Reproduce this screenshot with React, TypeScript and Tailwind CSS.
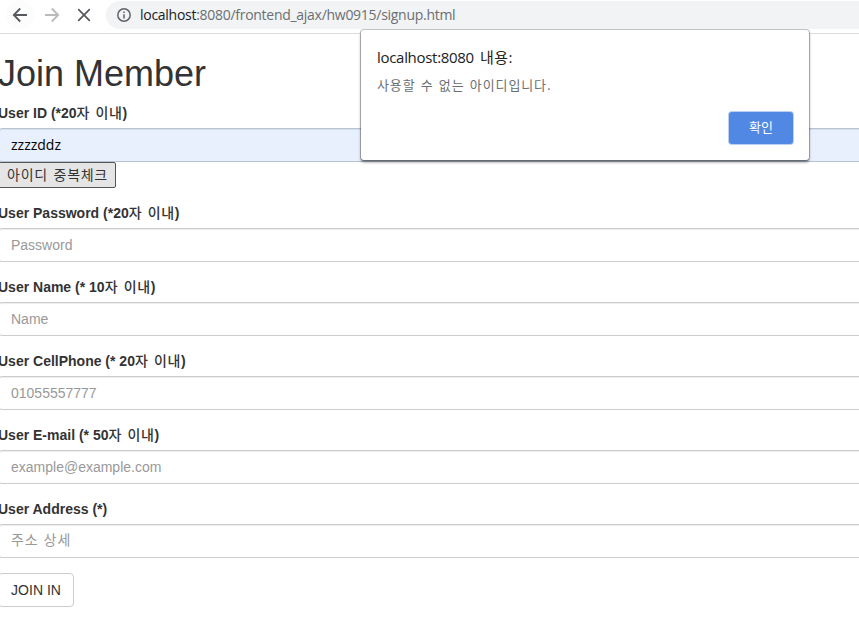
import React from 'react';

type FieldProps = {
  label: React.ReactNode;
  placeholder: string;
  korean?: boolean;
};

const fieldBox =
  'block h-[34px] w-full rounded-[4px] border px-3 text-sm leading-5 shadow-[inset_0_1px_1px_rgba(0,0,0,0.075)] outline-none placeholder:text-[#999999] placeholder:opacity-100';

function Hangul({ children }: { children: React.ReactNode }) {
  return (
    <span className="font-['Noto_Sans_CJK_KR',sans-serif] font-medium leading-none tracking-[0.6px] [word-spacing:1.8px]">
      {children}
    </span>
  );
}

function Label({ children }: { children: React.ReactNode }) {
  return <label className="mb-[5px] block h-5 whitespace-nowrap text-sm leading-5 font-bold">{children}</label>;
}

function Field({ label, placeholder, korean }: FieldProps) {
  return (
    <div className="mb-[15px]">
      <Label>{label}</Label>
      <input
        className={`${fieldBox} border-[#cccccc] bg-white ${
          korean
            ? "pt-1 pb-2 font-['Noto_Sans_CJK_KR',sans-serif] tracking-[0.9px] [word-spacing:1px]"
            : 'py-1.5'
        }`}
        placeholder={placeholder}
      />
    </div>
  );
}

function Toolbar() {
  return (
    <header className="flex h-[34px] items-start border-b border-[#dadce0] bg-white">
      <div className="ml-[6px] flex h-[29px] w-7 items-center justify-center rounded-full bg-[#fcfcfc]">
        <svg width="16" height="16" viewBox="0 0 16 16" className="mt-px" fill="none" stroke="#55585c" strokeWidth="1.8">
          <path d="M15 8H2M8.2 1.5L1.8 8l6.4 6.5" />
        </svg>
      </div>
      <div className="ml-[10px] flex h-[29px] w-4 items-center">
        <svg width="16" height="16" viewBox="0 0 16 16" className="mt-px" fill="none" stroke="#b9bbbd" strokeWidth="1.8">
          <path d="M1 8h13M7.8 1.5L14.2 8l-6.4 6.5" />
        </svg>
      </div>
      <div className="ml-4 flex h-[29px] w-4 items-center">
        <svg width="16" height="16" viewBox="0 0 16 16" className="mt-px" fill="none" stroke="#55585c" strokeWidth="1.7">
          <path d="M2.2 2.2l11.6 11.6M13.8 2.2L2.2 13.8" />
        </svg>
      </div>
      <div className="mt-px ml-[14px] flex h-7 flex-1 items-center rounded-l-full bg-[#f1f3f4] pl-[11px]">
        <svg width="14" height="14" viewBox="0 0 14 14" fill="none" stroke="#5f6368" strokeWidth="1.5">
          <circle cx="7" cy="7" r="6.2" />
          <path d="M7 6.2v4.3M7 3.5v1.5" />
        </svg>
        <span className="ml-[9px] whitespace-nowrap font-['Open_Sans',sans-serif] text-[14px] leading-5 tracking-[-0.28px] text-[#6b6f73]">
          <span className="text-[#202124]">localhost</span>:8080/frontend_ajax/hw0915/signup.html
        </span>
      </div>
    </header>
  );
}

function AlertDialog() {
  return (
    <div
      role="dialog"
      className="absolute top-[30px] left-[361px] flex h-[130px] w-[448px] flex-col rounded-[3px] bg-white px-4 pt-[17px] shadow-[0_0_0_1px_rgba(0,0,0,0.22),0_2px_3px_rgba(0,0,0,0.5)]"
    >
      <div className="h-5 whitespace-nowrap font-['Open_Sans','Noto_Sans_CJK_KR',sans-serif] text-[15px] leading-5 tracking-[-0.3px] text-[#202124]">
        localhost:8080<span className="tracking-[0.5px] [word-spacing:1.6px]"> 내용:</span>
      </div>
      <div className="mt-2 h-5 whitespace-nowrap font-['Noto_Sans_CJK_KR',sans-serif] text-[13px] leading-5 tracking-[0.9px] text-[#6b6f73] [word-spacing:1.4px]">
        사용할 수 없는 아이디입니다.
      </div>
      <button className="mt-[17px] h-8 w-16 self-end rounded-[3px] bg-[#5088e4] pb-[3px] font-['Noto_Sans_CJK_KR',sans-serif] text-[13px] leading-5 text-white shadow-[0_0_0_1px_#b9cff5]">
        확인
      </button>
    </div>
  );
}

export default function App() {
  return (
    <div className="relative h-[638px] w-full overflow-hidden bg-white font-['Liberation_Sans',Arial,sans-serif] text-[#333333]">
      <Toolbar />
      <main className="-ml-[2px] w-[900px] pt-5">
        <h1 className="mb-[9px] h-10 w-fit text-[36px] leading-10 font-medium">Join Member</h1>
        <div className="mb-[15px]">
          <Label>
            User ID (*20<Hangul>자 이내</Hangul>)
          </Label>
          <input
            className={`${fieldBox} border-[#b5c3d3] bg-[#e8f0fe] pt-[5px] pb-[7px] font-['Open_Sans',sans-serif] text-black`}
            defaultValue="zzzzddz"
          />
          <button className="block h-[26px] w-[118px] whitespace-nowrap rounded-[2px] border border-[#555555] bg-[#e5e5e5] pb-[3px] pl-px font-['Noto_Sans_CJK_KR',sans-serif] text-sm leading-5 tracking-[0.7px] [word-spacing:2px]">
            아이디 중복체크
          </button>
        </div>
        <Field label={<>User Password (*20<Hangul>자 이내</Hangul>)</>} placeholder="Password" />
        <Field label={<>User Name (* 10<Hangul>자 이내</Hangul>)</>} placeholder="Name" />
        <Field label={<>User CellPhone (* 20<Hangul>자 이내</Hangul>)</>} placeholder="01055557777" />
        <Field label={<>User E-mail (* 50<Hangul>자 이내</Hangul>)</>} placeholder="example@example.com" />
        <Field label="User Address (*)" placeholder="주소 상세" korean />
        <button className="h-[34px] w-[76px] whitespace-nowrap rounded-[4px] border border-[#cccccc] bg-white text-sm leading-5">
          JOIN IN
        </button>
      </main>
      <AlertDialog />
    </div>
  );
}
